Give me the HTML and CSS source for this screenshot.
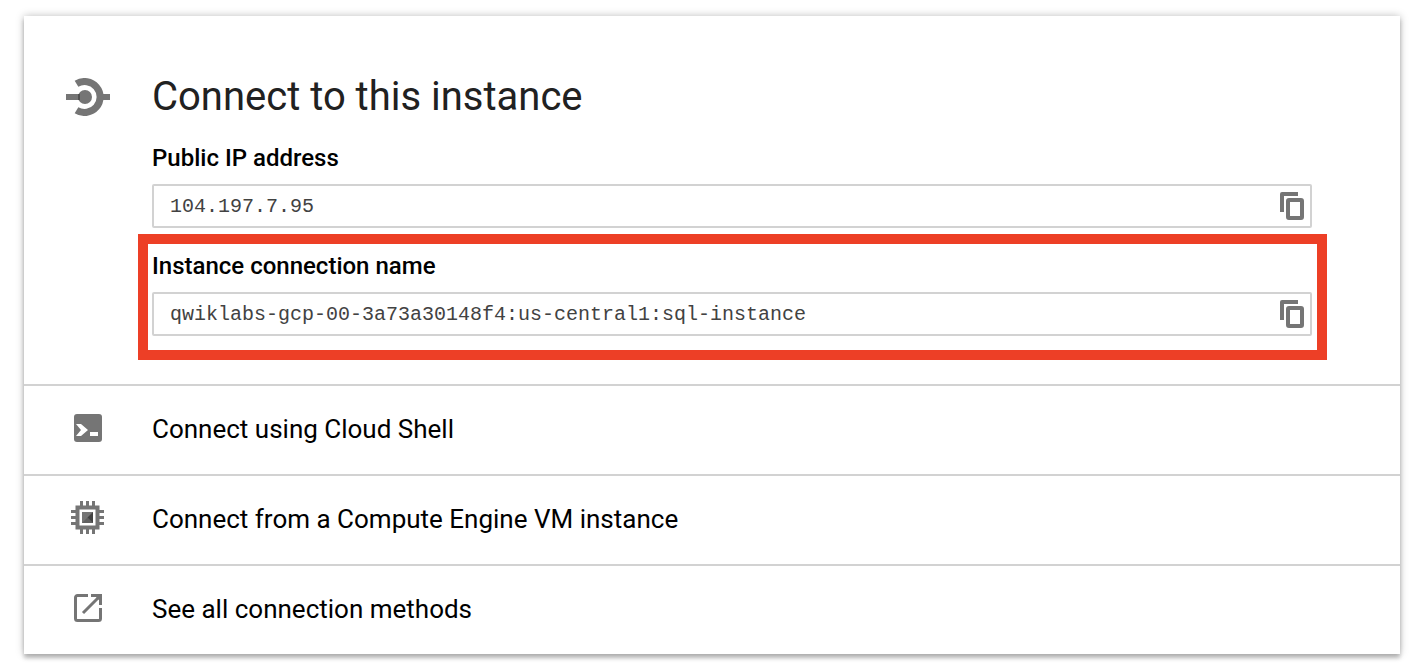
FILE: index.html
```html
<!DOCTYPE html>
<html lang="en">
<head>
<meta charset="utf-8">
<title>Connect to this instance</title>
<link rel="stylesheet" href="styles.css">
</head>
<body>
<main class="card">
  <section class="details">
    <div class="icon-cell heading-icon">
      <svg width="44" height="38" viewBox="0 0 44 38" fill="#757575" aria-hidden="true">
        <path d="M0 16h14v6H0zM36 16h8v6h-8z"/>
        <circle cx="19" cy="19" r="7"/>
        <path d="M12 16h2v6h-2z" fill="#505050"/>
        <path d="M10.500 5.800A15.500 15.500 0 1 1 10.500 32.200" fill="none" stroke="#757575" stroke-width="7"/>
      </svg>
    </div>
    <div class="content">
      <h1 class="title">Connect to this instance</h1>
      <div class="field">
        <label class="label" for="ip">Public IP address</label>
        <div class="box">
          <input class="value" id="ip" type="text" value="104.197.7.95" readonly>
          <button class="copy" type="button" aria-label="Copy public IP address">
            <svg width="24" height="28" viewBox="0 0 24 28" aria-hidden="true"><path d="M18 0H2a2 2 0 0 0-2 2v18h4V4h14z" fill="#757575"/><rect x="8" y="8" width="14" height="18" rx="1" fill="none" stroke="#757575" stroke-width="4"/></svg>
          </button>
        </div>
      </div>
      <div class="field highlighted">
        <label class="label" for="name">Instance connection name</label>
        <div class="box">
          <input class="value" id="name" type="text" value="qwiklabs-gcp-00-3a73a30148f4:us-central1:sql-instance" readonly>
          <button class="copy" type="button" aria-label="Copy instance connection name">
            <svg width="24" height="28" viewBox="0 0 24 28" aria-hidden="true"><path d="M18 0H2a2 2 0 0 0-2 2v18h4V4h14z" fill="#757575"/><rect x="8" y="8" width="14" height="18" rx="1" fill="none" stroke="#757575" stroke-width="4"/></svg>
          </button>
        </div>
      </div>
    </div>
  </section>
  <a class="row" href="#shell">
    <span class="icon-cell">
      <svg width="28" height="28" viewBox="0 0 28 28" aria-hidden="true"><rect width="28" height="28" rx="3" fill="#757575"/><path d="M2 10h5l7 6-7 6H2l5-6zM16 18h8v4h-8z" fill="#fff"/></svg>
    </span>
    <span>Connect using Cloud Shell</span>
  </a>
  <a class="row" href="#vm">
    <span class="icon-cell">
      <svg width="34" height="34" viewBox="0 0 34 34" aria-hidden="true">
        <path d="M10.500 0v33M16.500 0v33M22.500 0v33M0 10.500h33M0 16.500h33M0 22.500h33" stroke="#757575" stroke-width="3"/>
        <rect x="4.500" y="4.500" width="24" height="24" fill="#757575"/>
        <rect x="8.500" y="8.500" width="16" height="16" fill="#fff"/>
        <path d="M11 11h11v11H11z" fill="#757575"/>
        <path d="M16.500 16.500L22 22H11z" fill="#606060"/>
        <path d="M16.500 16.500L22 11v11z" fill="#424242"/>
      </svg>
    </span>
    <span>Connect from a Compute Engine VM instance</span>
  </a>
  <a class="row" href="#methods">
    <span class="icon-cell">
      <svg width="28" height="28" viewBox="0 0 28 28" fill="none" stroke="#757575" stroke-width="3" aria-hidden="true"><path d="M14 1.500H3.500a2 2 0 0 0-2 2v21a2 2 0 0 0 2 2h21a2 2 0 0 0 2-2V14M9 19L25 3"/><path d="M17 0h11v11h-3V6l-3-3h-5z" fill="#757575" stroke="none"/></svg>
    </span>
    <span>See all connection methods</span>
  </a>
</main>
</body>
</html>
```
FILE: styles.css
```css
* {
  box-sizing: border-box;
}

body {
  margin: 0;
  padding: 16px 22px 14px 24px;
  background: #fff;
  color: #000;
  font-family: Roboto, Arial, sans-serif;
}

.card {
  background: #fff;
  box-shadow: 0 4px 4px rgba(0, 0, 0, 0.22), 0 0 8px rgba(0, 0, 0, 0.26);
}

.details {
  display: flex;
  padding: 56px 88px 48px 0;
}

.icon-cell {
  display: flex;
  flex: none;
  align-items: center;
  justify-content: center;
  width: 128px;
}

.icon-cell svg {
  display: block;
}

.heading-icon {
  height: 50px;
}

.content {
  display: flex;
  flex: 1;
  flex-direction: column;
  gap: 24px;
}

.title {
  margin: 0 0 -2px;
  color: #212121;
  font-size: 40px;
  font-weight: 400;
  line-height: 50px;
}

.field {
  position: relative;
  display: flex;
  flex-direction: column;
  gap: 12px;
}

.highlighted::after {
  position: absolute;
  inset: -18px -15px -24px -14px;
  border: 10px solid #ed3f26;
  content: "";
  pointer-events: none;
}

.label {
  font-size: 24px;
  font-weight: 500;
  line-height: 28px;
}

.box {
  display: flex;
  align-items: center;
  height: 44px;
  padding: 0 6px 0 16px;
  border: 2px solid #d2d2d2;
  border-radius: 2px;
}

.value {
  flex: 1;
  min-width: 0;
  padding: 2px 0 0;
  border: 0;
  outline: 0;
  background: none;
  color: #424242;
  font-family: "Liberation Mono", monospace;
  font-size: 20px;
  line-height: 24px;
}

.copy {
  padding: 0;
  border: 0;
  background: none;
  cursor: pointer;
}

.copy svg {
  display: block;
}

.row {
  display: flex;
  align-items: center;
  min-height: 90px;
  padding-bottom: 2px;
  border-top: 2px solid #d2d2d2;
  color: #000;
  font-size: 26px;
  line-height: 32px;
  text-decoration: none;
}

.row .icon-cell {
  padding-bottom: 2px;
}

.icon-cell + span {
  padding-right: 24px;
}
```
